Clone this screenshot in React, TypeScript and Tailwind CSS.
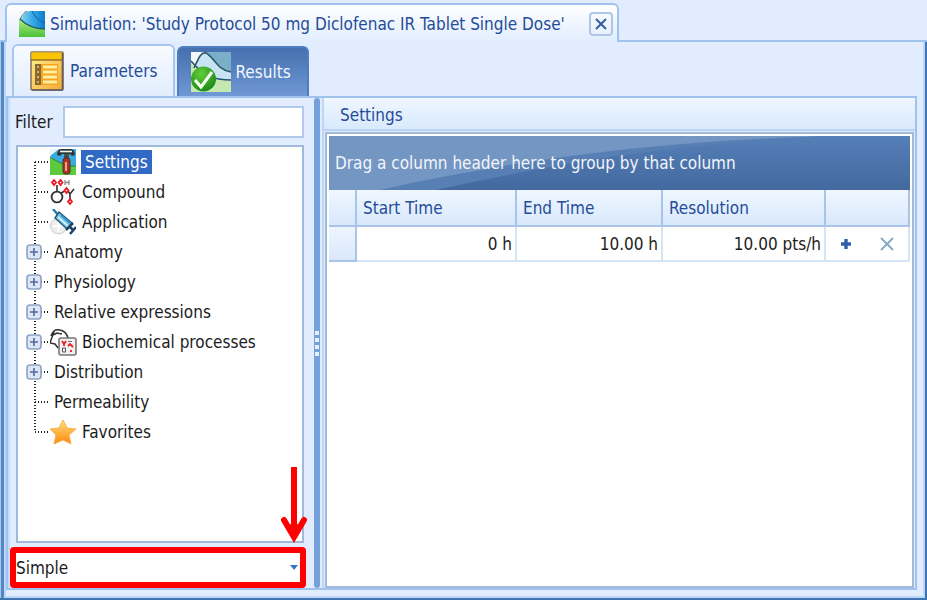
import type { ReactNode } from "react";

function SimulationIcon() {
  return (
    <svg width="26" height="26" viewBox="0 0 26 26" aria-hidden="true">
      <defs>
        <linearGradient id="simBlue" x1="0" x2="1">
          <stop offset="0" stopColor="#7fd3f3" />
          <stop offset="0.5" stopColor="#34a8e4" />
          <stop offset="1" stopColor="#0f7bd0" />
        </linearGradient>
        <linearGradient id="simGreen" x1="0" y1="0" x2="0" y2="1">
          <stop offset="0" stopColor="#b4f08c" />
          <stop offset="1" stopColor="#4cc036" />
        </linearGradient>
      </defs>
      <rect width="26" height="26" fill="#eef5fd" />
      <path d="M2 9C4 4 7 0 11 0H26V19C14 18 8 14 2 9Z" fill="url(#simBlue)" />
      <path d="M13 0C16 6 20 10 26 12" fill="none" stroke="#1b5795" />
      <path d="M0 7C7 14 13 18 26 18V26H0Z" fill="url(#simGreen)" />
      <path d="M1 9C3 4 5 2 8 0" fill="none" stroke="#376b50" />
      <path d="M1 8C8 15 17 18 26 18" fill="none" stroke="#245b62" strokeWidth="1.3" />
    </svg>
  );
}

function ParametersIcon() {
  return (
    <svg width="34" height="40" viewBox="0 0 34 40" aria-hidden="true">
      <defs>
        <linearGradient id="paramBody" x1="0" y1="0" x2="1" y2="1">
          <stop offset="0" stopColor="#fff08c" />
          <stop offset="1" stopColor="#f4a937" />
        </linearGradient>
      </defs>
      <rect x="1" y="1" width="32" height="38" rx="1" fill="url(#paramBody)" stroke="#8a7560" strokeWidth="1.6" />
      <rect x="1.5" y="1.5" width="30" height="7" fill="#fbc400" />
      <path d="M1 9H32" stroke="#8c6b1c" strokeWidth="1.4" />
      <path d="M32.5 2V39M2 39H33" stroke="#665a5c" strokeWidth="1.6" />
      <rect x="5" y="13" width="23" height="21" fill="#f6a320" />
      <rect x="5" y="13" width="6" height="21" fill="#8a6834" />
      <path d="M13 16H27M13 21H27M13 26H27M13 31H27" stroke="#fff0a1" strokeWidth="3" />
      <path d="M8 15V34" stroke="#d3b36b" strokeWidth="2" strokeDasharray="2 3" />
    </svg>
  );
}

function ResultsIcon() {
  return (
    <svg width="40" height="40" viewBox="0 0 40 40" aria-hidden="true">
      <defs>
        <radialGradient id="tick" cx="0.4" cy="0.3" r="0.7">
          <stop offset="0" stopColor="#62cf3c" />
          <stop offset="1" stopColor="#1d8a16" />
        </radialGradient>
      </defs>
      <rect width="40" height="40" fill="#f2f8f6" />
      <path d="M14 0H40V20C28 17 22 5 14 0Z" fill="#7aaec9" />
      <path d="M3 17C8 5 10 0 15 1C22 4 27 18 40 20V29C21 29 14 24 3 14Z" fill="#c7e4f2" />
      <path d="M0 11C15 26 23 29 40 29V40H0Z" fill="#c5e8b0" />
      <path d="M3 16C8 5 10 0 15 1C22 4 26 18 40 20M0 9C13 24 22 28 40 28" fill="none" stroke="#28556a" strokeWidth="1.6" />
      <circle cx="12.5" cy="27" r="12.5" fill="url(#tick)" />
      <path d="M4 28L10 35L21 20" fill="none" stroke="#f5fff2" strokeWidth="3" />
    </svg>
  );
}

function SettingsIcon() {
  return (
    <svg width="26" height="26" viewBox="0 0 26 26" aria-hidden="true">
      <rect width="26" height="26" fill="#e8f5f8" />
      <path d="M0 7L9 0H26V18L10 16Z" fill="#3aabe2" />
      <path d="M0 8C8 13 17 18 26 17V26H0Z" fill="#5cca3c" />
      <path d="M0 8C8 13 17 18 26 17" stroke="#267d43" fill="none" />
      <path d="M7 6Q7 0 12 0H21Q25 1 25 6L22 7L20 5H12L10 7Z" fill="#303534" />
      <path d="M10 2.5H22" stroke="#f4f4ee" strokeWidth="1.6" />
      <rect x="14" y="5" width="5" height="6" fill="#4b4f48" />
      <rect x="13" y="9" width="7" height="16" rx="2.5" fill="#a93426" stroke="#4a3025" />
      <path d="M16 13V22" stroke="#f5a085" strokeWidth="2" />
    </svg>
  );
}

function CompoundIcon() {
  return (
    <svg width="26" height="26" viewBox="0 0 26 26" aria-hidden="true">
      <circle cx="7" cy="18" r="5.4" fill="none" stroke="#303030" strokeWidth="1.8" />
      <path d="M7 12V6M11 14L15 12M18 12L20 15L24 10M20 15V20" fill="none" stroke="#303030" strokeWidth="1.6" />
      <path
        d="M4 1L6 3.500L4 6L2 3.500ZM10.500 1L12.500 3.500L10.500 6L8.500 3.500ZM16.500 9L18.500 11.500L16.500 14L14.500 11.500ZM20 20L22 22.500L20 25L18 22.500Z"
        fill="white"
        stroke="#ed1c24"
        strokeWidth="1.8"
      />
      <path d="M15 1V6M19 1V6M15 3.5H19" stroke="#888" strokeWidth="1.3" />
    </svg>
  );
}

function ApplicationIcon() {
  return (
    <svg width="26" height="26" viewBox="0 0 26 26" aria-hidden="true">
      <circle cx="8.5" cy="17" r="8" fill="#eee" stroke="#ccc" />
      <path d="M3 17H14M8.5 11V23" stroke="white" strokeWidth="2" />
      <path d="M3 0L9 7" stroke="#267fae" strokeWidth="2.5" />
      <path d="M9 3L22 14L17 20L5 9Z" fill="#79c6e9" stroke="#285979" strokeWidth="1.5" />
      <path d="M8 8L18 17" stroke="#edf7fd" strokeWidth="1.5" />
      <path d="M11 6L20 14" stroke="#2f8cc4" strokeWidth="2" />
      <path d="M16 21L23 14M19 17L24 22M20 25L26 18" stroke="#1f4367" strokeWidth="2.5" />
    </svg>
  );
}

function ProcessIcon() {
  return (
    <svg width="27" height="27" viewBox="0 0 27 27" aria-hidden="true">
      <path d="M1 7C3 1 6 0 10 1C15 2 17 5 18 9M4 3L1 11L0 14L5 15L8 19M3 6L7 4L12 5" fill="none" stroke="#343434" strokeWidth="1.5" />
      <rect x="9" y="9" width="17" height="17" rx="2" fill="#f0f0f0" stroke="#777" strokeWidth="1.6" />
      <path d="M12 12L14 15L16 12M14 15V17M18 17L20 15L23 18M21 23V21" fill="none" stroke="#ed1c24" strokeWidth="1.8" />
      <path d="M12.5 19H15.5V23H12.5Z" fill="none" stroke="#555" />
      <path d="M18 12.5H22" stroke="#777" />
    </svg>
  );
}

function StarIcon() {
  return (
    <svg width="26" height="26" viewBox="0 0 26 26" aria-hidden="true">
      <defs>
        <linearGradient id="star" x1="0" y1="0" x2="0" y2="1">
          <stop stopColor="#ffe278" />
          <stop offset="1" stopColor="#ff850e" />
        </linearGradient>
      </defs>
      <path d="M13 1L17 9L26 10L19 16L21 25L13 21L4 25L6 16L0 10L9 9Z" fill="url(#star)" stroke="#f8b14e" />
    </svg>
  );
}

function ExpandIcon() {
  return (
    <svg width="16" height="16" viewBox="0 0 16 16" aria-hidden="true">
      <rect x="1" y="1" width="14" height="14" rx="3" fill="#dce6f4" stroke="#8fa2c4" strokeWidth="1.6" />
      <path d="M4 8H12M8 4V12" stroke="#536b9c" strokeWidth="1.6" />
    </svg>
  );
}

type Node = { label: string; icon?: ReactNode; group?: boolean; selected?: boolean };

const nodes: Node[] = [
  { label: "Settings", icon: <SettingsIcon />, selected: true },
  { label: "Compound", icon: <CompoundIcon /> },
  { label: "Application", icon: <ApplicationIcon /> },
  { label: "Anatomy", group: true },
  { label: "Physiology", group: true },
  { label: "Relative expressions", group: true },
  { label: "Biochemical processes", icon: <ProcessIcon />, group: true },
  { label: "Distribution", group: true },
  { label: "Permeability" },
  { label: "Favorites", icon: <StarIcon /> },
];

function TreeRow({ node, first, last }: { node: Node; first: boolean; last: boolean }) {
  return (
    <li className="flex h-[30px] items-center" role="treeitem" aria-selected={!!node.selected}>
      <div className="relative h-full w-8 shrink-0">
        <svg className="absolute inset-0" width="32" height="30" aria-hidden="true">
          <path
            d={first ? "M17 15V30" : last ? "M17 0V15" : "M17 0V30"}
            stroke="#222"
            strokeWidth="2"
            strokeDasharray="1 2"
          />
          <path d="M17 15H32" stroke="#222" strokeWidth="2" strokeDasharray="1 2" />
        </svg>
        {node.group && (
          <button type="button" aria-label={"Expand " + node.label} className="absolute top-[7px] left-2">
            <ExpandIcon />
          </button>
        )}
      </div>
      {node.icon && <span className="w-7 shrink-0">{node.icon}</span>}
      <span className={node.selected ? "ml-[3px] bg-[#316ac5] px-1 text-white" : "ml-1"}>{node.label}</span>
    </li>
  );
}

function GroupPanel() {
  return (
    <div className="relative flex h-[54px] shrink-0 items-center bg-[#7496c3] text-[#f2f5fa]">
      <svg className="absolute inset-0 size-full" viewBox="0 0 578 54" preserveAspectRatio="none" aria-hidden="true">
        <defs>
          <linearGradient id="swoosh" x1="0" y1="0" x2="0" y2="1">
            <stop offset="0" stopColor="#557fb8" />
            <stop offset="1" stopColor="#43699f" />
          </linearGradient>
        </defs>
        <path d="M50 54C200 20 350 4 500 0H578V54Z" fill="#587fb4" />
        <path d="M106 54C190 36 270 20 350 12C420 5 470 0 500 0H578V54Z" fill="url(#swoosh)" />
      </svg>
      <p className="relative px-[6px]">Drag a column header here to group by that column</p>
    </div>
  );
}

function SettingsTable() {
  const head = "border-r-2 border-b-2 border-[#a9c4e8] px-[6px] text-left font-normal";
  const cell = "border-r-2 border-b-2 border-[#d5e4f7] bg-white px-[3px] text-right";
  return (
    <table className="w-full table-fixed border-separate border-spacing-0">
      <thead className="text-[#254c98]">
        <tr className="h-[37px] bg-linear-to-b from-[#f0f7ff] to-[#d6e7fb]">
          <th className={head + " w-7"} aria-label="Row" />
          <th className={head + " w-[160px]"}>Start Time</th>
          <th className={head + " w-[146px]"}>End Time</th>
          <th className={head + " w-[163px]"}>Resolution</th>
          <th className={head} aria-label="Actions" />
        </tr>
      </thead>
      <tbody>
        <tr className="h-[35px]">
          <td className="border-r-2 border-b-2 border-[#a9c4e8] bg-linear-to-b from-[#eef5ff] to-[#d9e8fb]" />
          <td className={cell}>0 h</td>
          <td className={cell}>10.00 h</td>
          <td className={cell}>10.00 pts/h</td>
          <td className="border-r-2 border-b-2 border-[#d5e4f7] bg-white">
            <div className="flex items-center justify-around">
              <button type="button" aria-label="Add row">
                <svg width="12" height="12" viewBox="0 0 12 12" aria-hidden="true">
                  <path d="M6 1V11M1 6H11" stroke="#2f62a8" strokeWidth="3.4" />
                </svg>
              </button>
              <button type="button" aria-label="Delete row">
                <svg width="14" height="14" viewBox="0 0 14 14" aria-hidden="true">
                  <path d="M1 1L13 13M13 1L1 13" stroke="#8aa9c6" strokeWidth="2" />
                </svg>
              </button>
            </div>
          </td>
        </tr>
      </tbody>
    </table>
  );
}

export default function App() {
  return (
    <div className="flex h-screen flex-col bg-[#e1edfe] font-['DejaVu_Sans_Condensed','DejaVu_Sans',sans-serif] text-[17px] leading-6 text-[#1c1c1c]">
      <header className="flex h-[42px] shrink-0 items-end">
        <div className="h-[2px] w-[5px] bg-[#9fc2ef]" />
        <div className="flex h-[39px] items-center rounded-t-md border-2 border-b-0 border-[#9fc2ef] bg-linear-to-b from-white to-[#e1edfe] pr-1 pl-3">
          <SimulationIcon />
          <h1 className="ml-[5px] whitespace-nowrap text-[#254c98]">
            Simulation: 'Study Protocol 50 mg Diclofenac IR Tablet Single Dose'
          </h1>
          <button
            type="button"
            aria-label="Close"
            className="ml-6 flex size-6 items-center justify-center rounded-sm border-2 border-[#b0c6e6]"
          >
            <svg width="12" height="12" viewBox="0 0 12 12" aria-hidden="true">
              <path d="M1 1L11 11M11 1L1 11" stroke="#315e9f" strokeWidth="2" />
            </svg>
          </button>
        </div>
        <div className="h-[2px] flex-1 bg-[#9fc2ef]" />
      </header>

      <div className="flex min-h-0 flex-1 border-b-2 border-[#3f73b2]">
        <div className="w-1 shrink-0 border-l border-[#a9c8f0] bg-[#5486c2]" />
        <div className="flex min-w-0 flex-1 flex-col border-x-2 border-b-2 border-[#bcd6f8] pr-[6px] pb-[6px]">
          <div className="flex h-[54px] shrink-0 items-end gap-[2px] pl-[6px]" role="tablist">
            <button
              type="button"
              role="tab"
              aria-selected="true"
              className="flex h-[52px] items-center gap-[6px] rounded-t-md border-2 border-b-0 border-[#a6c6f1] bg-linear-to-b from-[#f8fbff] to-[#e1edfe] px-4 text-[#254c98]"
            >
              <ParametersIcon />
              Parameters
            </button>
            <button
              type="button"
              role="tab"
              aria-selected="false"
              className="flex h-[50px] items-center gap-1 rounded-t-md border-2 border-b-0 border-[#4f7dbf] bg-linear-to-b from-[#456fae] to-[#7098d5] px-3 pr-4 text-[#f1f6ff]"
            >
              <ResultsIcon />
              Results
            </button>
          </div>

          <main className="flex min-h-0 flex-1 border-2 border-[#9fc2ef]">
            <aside className="relative flex w-[300px] shrink-0 flex-col border-l-2 border-[#c5dbf8] pt-2">
              <div className="flex items-center gap-2 pr-1 pl-[5px]">
                <label htmlFor="filter" className="w-10">Filter</label>
                <input id="filter" className="h-8 min-w-0 flex-1 border-2 border-[#b0c9ec] bg-white px-2" />
              </div>
              <ul role="tree" className="mt-[7px] mr-1 mb-1 ml-[6px] flex-1 border-2 border-[#a0bade] bg-white">
                {nodes.map((node, i) => (
                  <TreeRow key={node.label} node={node} first={i === 0} last={i === nodes.length - 1} />
                ))}
              </ul>
              <div className="relative mr-[2px] flex h-[41px] rounded-sm border-[6px] border-[#ff0000] bg-white">
                <select aria-label="View" className="w-full appearance-none bg-white">
                  <option>Simple</option>
                </select>
                <svg className="pointer-events-none absolute top-3 right-[2px]" width="8" height="5" viewBox="0 0 8 5" aria-hidden="true">
                  <path d="M0 0H8L4 5Z" fill="#3b73c0" />
                </svg>
              </div>
              <svg className="pointer-events-none absolute right-0 bottom-[44px]" width="28" height="78" viewBox="0 0 28 78" aria-hidden="true">
                <path d="M14 1V60" stroke="#ff0000" strokeWidth="6" />
                <path d="M4 54L14 71L24 54" fill="none" stroke="#ff0000" strokeWidth="6" strokeLinecap="round" />
                <path d="M10 58H18L14 70Z" fill="#ff0000" />
              </svg>
            </aside>

            <div className="ml-[6px] flex w-[6px] shrink-0 flex-col items-center justify-center gap-[3px] rounded-sm bg-[#76a0d9]" role="separator">
              <span className="size-1 bg-[#e6f0fd]" />
              <span className="size-1 bg-[#e6f0fd]" />
              <span className="size-1 bg-[#e6f0fd]" />
              <span className="size-1 bg-[#e6f0fd]" />
            </div>

            <section className="ml-[2px] flex min-w-0 flex-1 flex-col border-l-2 border-[#bcd6f8]">
              <h2 className="h-[33px] shrink-0 border-b-2 border-[#b9d3f6] bg-linear-to-b from-[#f0f7ff] to-[#d9e9fd] px-4 pt-[5px] text-[#254c98]">
                Settings
              </h2>
              <div className="mx-[1px] mt-[1px] flex flex-1 flex-col border-2 border-[#a2b9da] bg-white p-[2px]">
                <GroupPanel />
                <SettingsTable />
              </div>
            </section>
          </main>
        </div>
        <div className="w-[2px] shrink-0 bg-[#3f73b2]" />
      </div>
    </div>
  );
}
